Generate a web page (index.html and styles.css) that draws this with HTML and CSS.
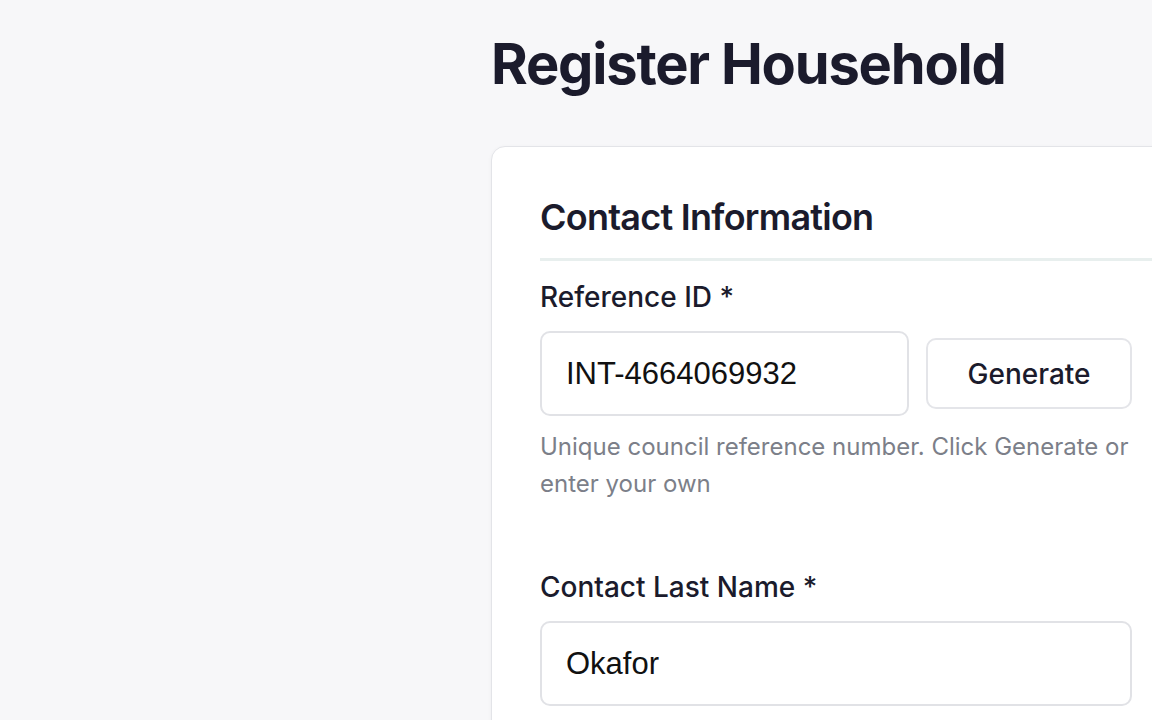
FILE: index.html
```html
<!DOCTYPE html>
<html lang="en">
<head>
<meta charset="utf-8">
<title>Register Household</title>
<link rel="stylesheet" href="styles.css">
</head>
<body>
<div class="page">
  <aside class="sidebar"></aside>
  <main class="main">
    <h1 class="page-title">Register Household</h1>
    <section class="card">
      <h2 class="section-title">Contact Information</h2>
      <div class="fields">
        <div class="field">
          <label class="label" for="ref">Reference ID *</label>
          <div class="input-row">
            <input class="input input-ref" id="ref" type="text" value="INT-4664069932">
            <button class="btn" type="button">Generate</button>
          </div>
          <p class="help">Unique council reference number. Click Generate or enter your own</p>
        </div>
        <div class="field field-gap">
          <label class="label" for="last">Contact Last Name *</label>
          <input class="input" id="last" type="text" value="Okafor">
        </div>
      </div>
    </section>
  </main>
</div>
</body>
</html>
```

FILE: styles.css
```css
* { box-sizing: border-box; }
html, body {
  margin: 0;
  padding: 0;
  background: #f7f7f9;
  overflow: hidden;
}
body {
  font-family: Inter, "Noto Sans", sans-serif;
  color: #1b1b2c;
  width: 1152px;
  height: 720px;
}
.page {
  display: grid;
  grid-template-columns: 443px 1fr;
  height: 720px;
}
.main {
  padding: 30px 0 0 48px;
  min-width: 0;
  overflow: hidden;
}
.page-title {
  margin: 0 0 48px 0;
  font-size: 56px;
  font-weight: 700;
  line-height: 68px;
  letter-spacing: -1.2px;
  color: #1b1b2c;
}
.card {
  width: 820px;
  background: #ffffff;
  border: 1px solid #e3e4e8;
  border-radius: 14px;
  padding: 48px;
  box-shadow: 0 1px 4px rgba(20, 20, 40, 0.04);
}
.section-title {
  margin: 0 -48px 0 0;
  padding-bottom: 19px;
  font-size: 36px;
  font-weight: 600;
  line-height: 44px;
  letter-spacing: -0.75px;
  color: #1b1b2c;
  border-bottom: 3px solid #e8efee;
}
.fields {
  width: 592px;
  padding-top: 19px;
}
.field {
  display: flex;
  flex-direction: column;
}
.field-gap {
  margin-top: 68px;
}
.label {
  font-size: 28px;
  font-weight: 500;
  line-height: 35px;
  color: #1b1b2c;
  margin-bottom: 16px;
}
.input-row {
  display: flex;
  align-items: center;
  gap: 17px;
}
.input {
  height: 85px;
  border: 2px solid #e1e2e6;
  border-radius: 10px;
  background: #fff;
  padding: 0 24px;
  font-family: "Liberation Sans", Arial, sans-serif;
  font-size: 31px;
  color: #111111;
  outline: none;
  width: 100%;
}
.input-ref {
  width: 369px;
  flex: none;
}
.btn {
  flex: 1;
  height: 71px;
  border: 2px solid #e4e5e9;
  border-radius: 10px;
  background: #fff;
  font-family: Inter, "Noto Sans", sans-serif;
  font-size: 28px;
  font-weight: 500;
  color: #1b1b2c;
}
.help {
  margin: 12px 0 0 0;
  font-size: 24px;
  line-height: 37px;
  color: #7c7f89;
}
```
